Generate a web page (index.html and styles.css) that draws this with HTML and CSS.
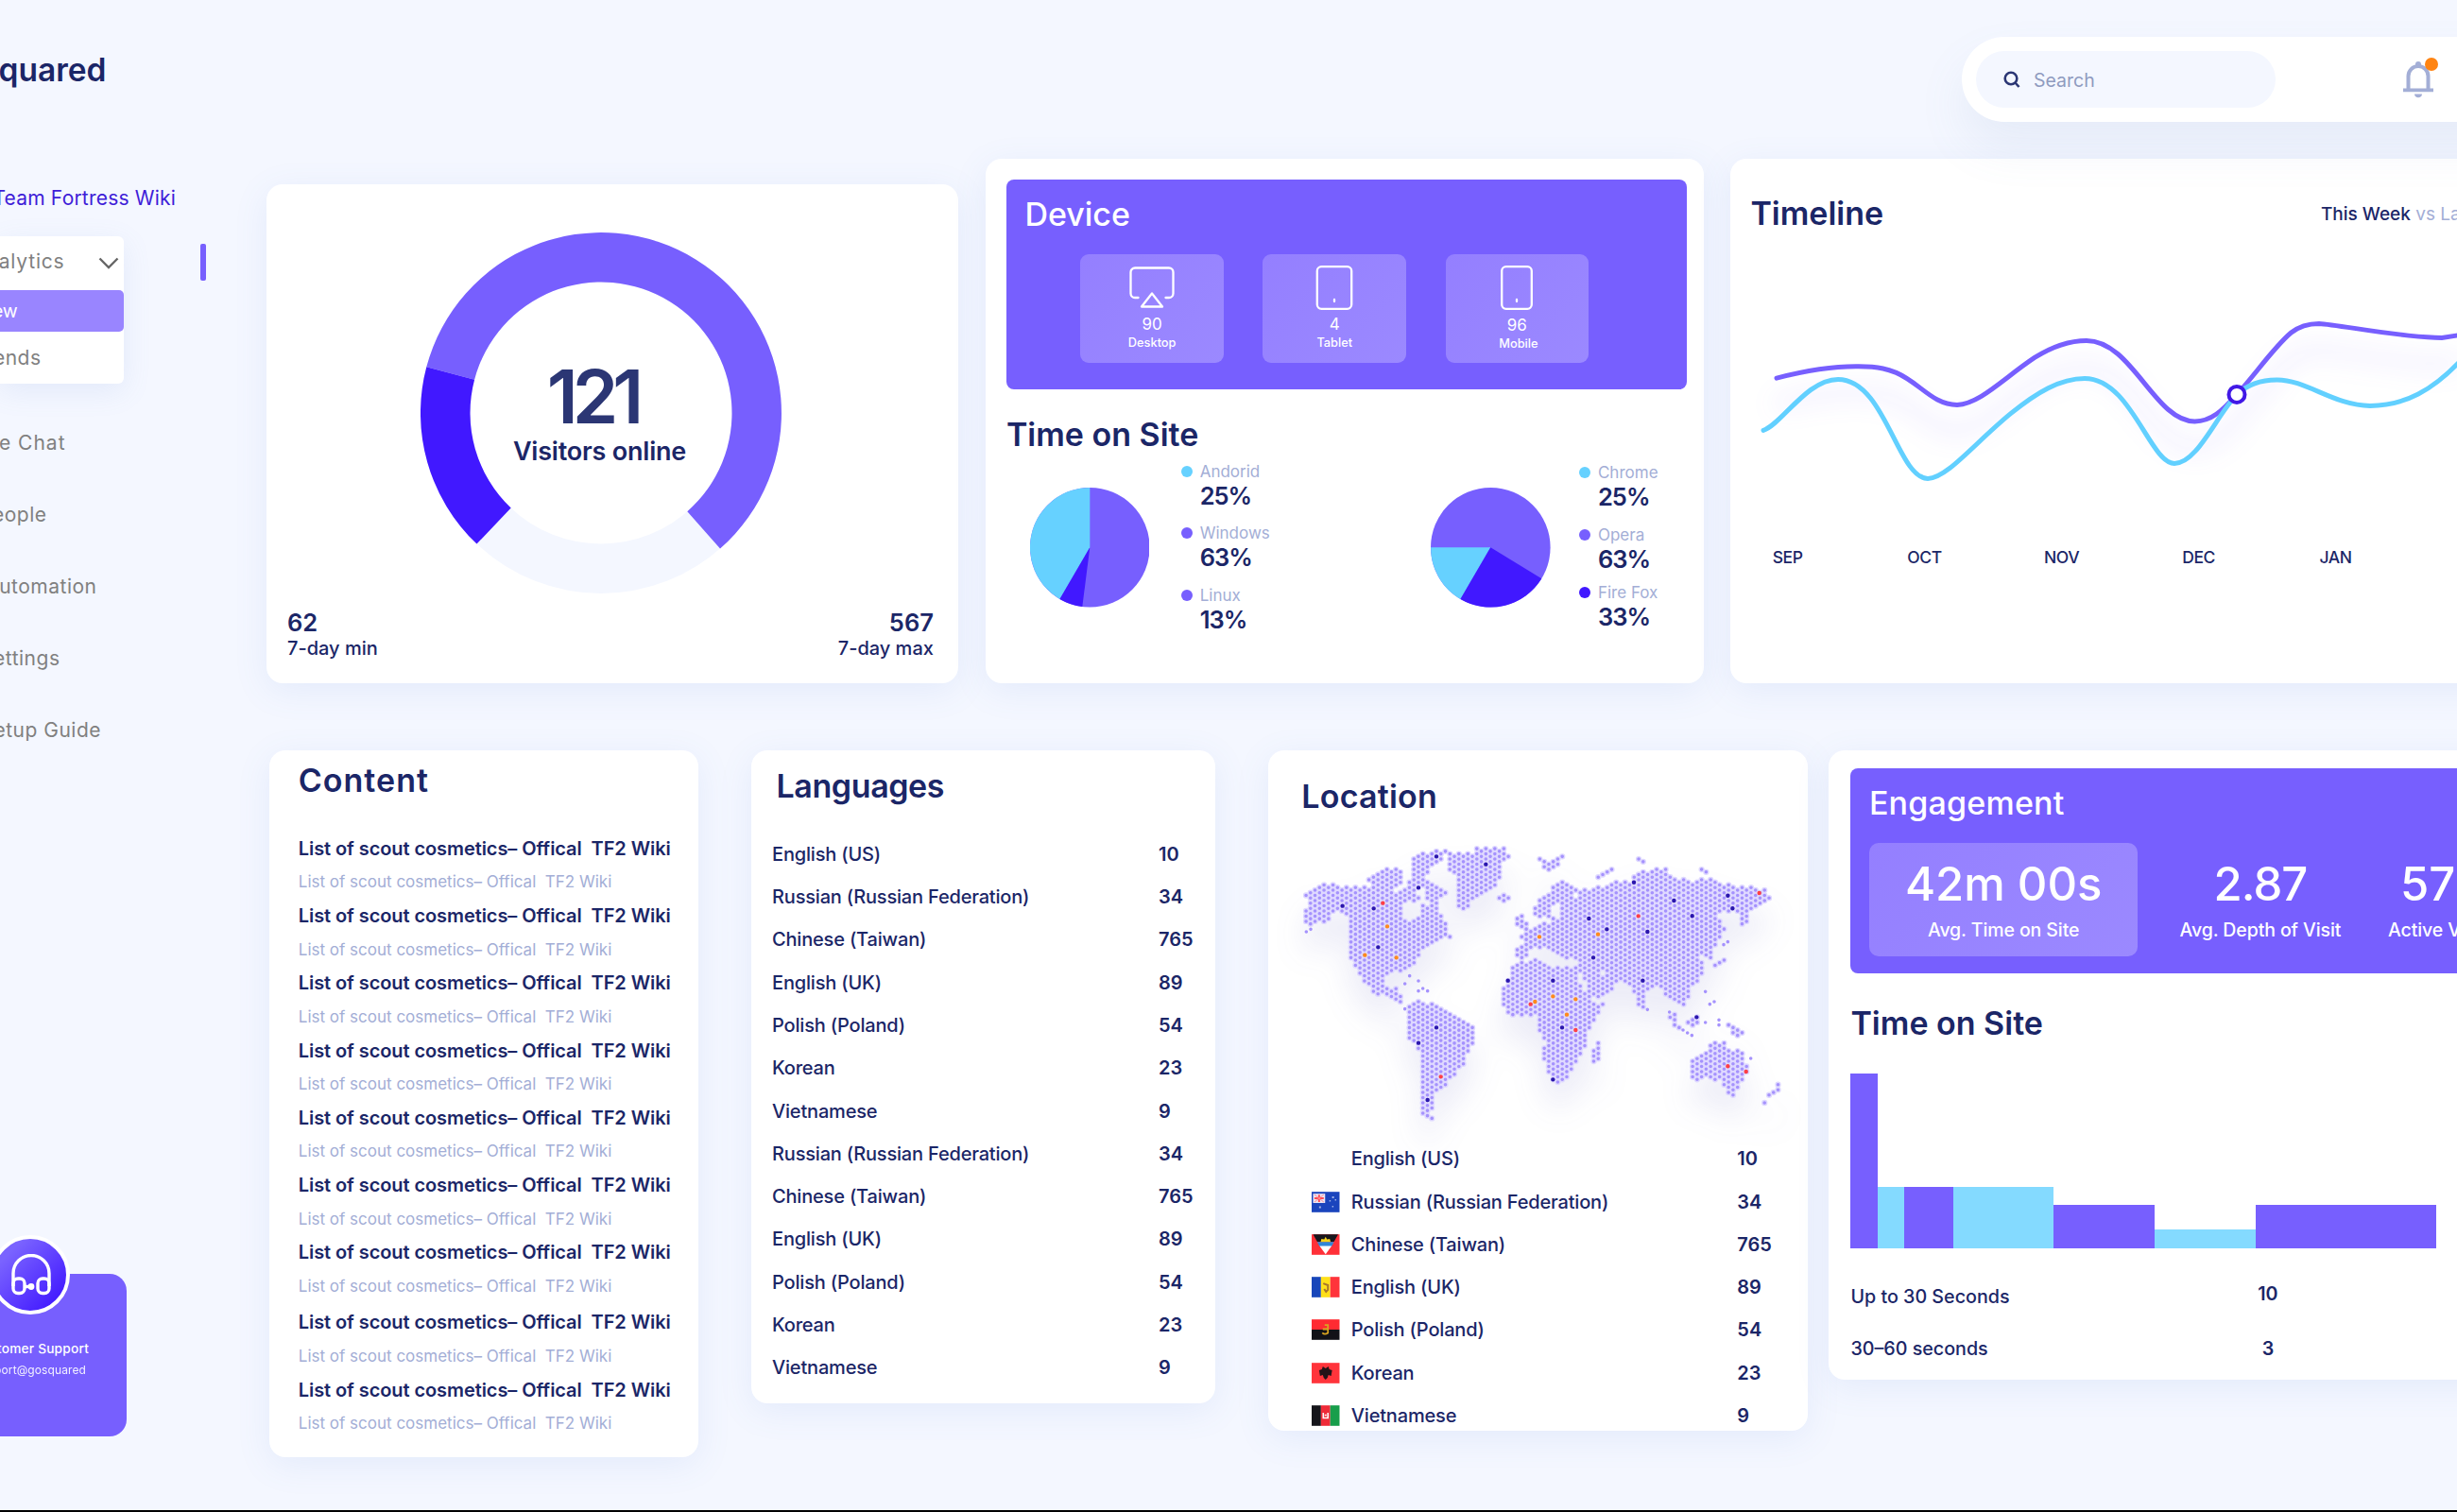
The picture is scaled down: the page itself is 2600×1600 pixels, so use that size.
FILE: index.html
```html
<!DOCTYPE html>
<html lang="en">
<head>
<meta charset="utf-8">
<title>GoSquared Dashboard</title>
<link rel="stylesheet" href="styles.css">
</head>
<body>
<aside class="sidebar">
  <div class="logo">GoSquared</div>
  <div class="project">Team Fortress Wiki</div>
  <div class="menu">
    <div class="menu-head"><span class="label">Analytics</span>
      <svg class="chevron" viewBox="0 0 22 13"><path d="M1.5 1.5 11 11 20.5 1.5"/></svg></div>
    <div class="menu-item active"><span class="label">View</span></div>
    <div class="menu-item"><span class="label">Trends</span></div>
  </div>
  <span class="marker"></span>
  <nav class="nav">
    <a>Live Chat</a><a>People</a><a>Automation</a><a>Settings</a><a>Setup Guide</a>
  </nav>
  <div class="support">
    <span class="support-badge">
      <svg viewBox="0 0 44 44"><path d="M3 34V20.500a19 19 0 0 1 38 0V34"/><rect x="3" y="26" width="12" height="15.500" rx="5"/><rect x="29" y="26" width="12" height="15.500" rx="5"/><path d="M15 34.500h6"/><circle cx="22" cy="34.500" r="1.700"/></svg>
    </span>
    <strong>Customer Support</strong>
    <span>support@gosquared</span>
  </div>
</aside>

<main class="main">
  <header class="topbar">
    <div class="topbar-pill">
      <div class="search">
        <svg viewBox="0 0 18 18"><circle cx="8" cy="8" r="6.300"/><path d="M12.500 12.500 16.500 17"/></svg>
        <span>Search</span>
      </div>
      <div class="bell">
        <svg viewBox="0 0 34 40"><path d="M6.500 31V16.500a10.500 10.500 0 0 1 21 0V31" fill="none" stroke="#a3aed6" stroke-width="4"/><path d="M1 29.500h32v3.800H1zM13 35.500h8c0 5-8 5-8 0zM14 4a3 3 0 0 1 6 0v3h-6z" fill="#a3aed6"/></svg>
        <span class="bell-dot"></span>
      </div>
    </div>
  </header>

  <section class="row row-top">
    <article class="card visitors">
      <div class="donut">
        <svg viewBox="-191 -191 382 382">
          <circle r="164.750" fill="none" stroke="#f4f7ff" stroke-width="52.500"/>
          <path fill="#775ffe" d="M-184.700-48.700A191 191 0 1 1 126 143.600L91.300 104.200A138.500 138.500 0 1 0-133.900-35.300z"/>
          <path fill="#4118ff" d="M-184.700-48.700A191 191 0 0 0-131.500 138.600L-95.300 100.500A138.500 138.500 0 0 1-133.900-35.300z"/>
        </svg>
        <div class="donut-text"><b>121</b><span>Visitors online</span></div>
      </div>
      <div class="range">
        <div><b>62</b><span>7-day min</span></div>
        <div class="right"><b>567</b><span>7-day max</span></div>
      </div>
    </article>

    <article class="card device">
      <div class="panel device-panel">
        <h2>Device</h2>
        <div class="tiles">
          <div class="tile">
            <svg viewBox="0 0 48 47"><path d="M9.500 34H6a4.500 4.500 0 0 1-4.500-4.500V7A4.500 4.500 0 0 1 6 2.500h36A4.500 4.500 0 0 1 46.500 7v22.500A4.500 4.500 0 0 1 42 34h-3.500M24 29.500 35 43.500H13z"/></svg>
            <b>90</b><span>Desktop</span></div>
          <div class="tile">
            <svg viewBox="0 0 48 47"><rect x="5.800" y="1.200" width="36.400" height="44.600" rx="4.500"/><path d="M24 36v2"/></svg>
            <b>4</b><span>Tablet</span></div>
          <div class="tile">
            <svg viewBox="0 0 48 47"><rect x="8.200" y="1.200" width="31.600" height="44.600" rx="4.500"/><path d="M24 36v2"/></svg>
            <b>96</b><span>Mobile</span></div>
        </div>
      </div>
      <h2>Time on Site</h2>
      <div class="pies">
        <svg class="pie" viewBox="-63.300 -63.300 126.600 126.600"><circle r="63.300" fill="#775ffe"/><path fill="#66d1ff" d="M0 0V-63.300A63.300 63.300 0 0 0-31.900 54.700z"/><path fill="#4118ff" d="M0 0-31.900 54.700A63.300 63.300 0 0 0-8 62.800z"/></svg>
        <ul class="legend">
          <li><i class="cyan"></i><span>Andorid</span><b>25%</b></li>
          <li><i></i><span>Windows</span><b>63%</b></li>
          <li><i></i><span>Linux</span><b>13%</b></li>
        </ul>
        <svg class="pie pie-2" viewBox="-63.300 -63.300 126.600 126.600"><circle r="63.300" fill="#775ffe"/><path fill="#66d1ff" d="M0 0H-63.300A63.300 63.300 0 0 0-31.900 54.700z"/><path fill="#4118ff" d="M0 0-31.900 54.700A63.300 63.300 0 0 0 54 33z"/></svg>
        <ul class="legend legend-2">
          <li><i class="cyan"></i><span>Chrome</span><b>25%</b></li>
          <li><i></i><span>Opera</span><b>63%</b></li>
          <li><i class="blue"></i><span>Fire Fox</span><b>33%</b></li>
        </ul>
      </div>
    </article>

    <article class="card timeline">
      <div class="timeline-head"><h2>Timeline</h2><p><b>This Week</b> vs Last Week</p></div>
      <svg class="chart" viewBox="1831 245.600 769 331.400">
        <path class="line purple" d="M1880 399.700C1910 392 1940 387 1967 387.400C1990 387.500 1999 391 2006.600 394C2032 405 2045 428 2071 428C2095 427 2120 400 2153 378C2172 366 2190 360 2208 360C2256 360 2280 445.500 2322.500 445.500C2340 445.500 2352 434 2367 417C2385 398 2406 367 2424.500 351.600C2434 344 2444 342 2454 342C2475 343 2540 357 2584 357L2604 354"/>
        <path class="line cyan" d="M1866 455C1885 449 1912 401 1945 401C1995 401 2008 506 2040 506C2060 506 2090 468 2128 437C2155 415 2180 400 2206 400C2255 400 2275 490 2301 490C2325 490 2345 440 2367 417C2380 405 2394 401.500 2409 401.500C2440 401 2470 429 2508 429C2545 429 2575 412 2604 381"/>
        <circle cx="2367" cy="417" r="8.500" fill="#fff" stroke="#4118e6" stroke-width="4"/>
      </svg>
      <div class="months"><span>SEP</span><span>OCT</span><span>NOV</span><span>DEC</span><span>JAN</span></div>
    </article>
  </section>

  <section class="row row-bottom">
    <article class="card content">
      <h2>Content</h2>
      <dl>
        <dt>List of scout cosmetics– Offical  TF2 Wiki</dt><dd>List of scout cosmetics– Offical  TF2 Wiki</dd>
        <dt>List of scout cosmetics– Offical  TF2 Wiki</dt><dd>List of scout cosmetics– Offical  TF2 Wiki</dd>
        <dt>List of scout cosmetics– Offical  TF2 Wiki</dt><dd>List of scout cosmetics– Offical  TF2 Wiki</dd>
        <dt>List of scout cosmetics– Offical  TF2 Wiki</dt><dd>List of scout cosmetics– Offical  TF2 Wiki</dd>
        <dt>List of scout cosmetics– Offical  TF2 Wiki</dt><dd>List of scout cosmetics– Offical  TF2 Wiki</dd>
        <dt>List of scout cosmetics– Offical  TF2 Wiki</dt><dd>List of scout cosmetics– Offical  TF2 Wiki</dd>
        <dt>List of scout cosmetics– Offical  TF2 Wiki</dt><dd>List of scout cosmetics– Offical  TF2 Wiki</dd>
        <dt class="gap">List of scout cosmetics– Offical  TF2 Wiki</dt><dd>List of scout cosmetics– Offical  TF2 Wiki</dd>
        <dt>List of scout cosmetics– Offical  TF2 Wiki</dt><dd>List of scout cosmetics– Offical  TF2 Wiki</dd>
      </dl>
    </article>

    <article class="card languages">
      <h2>Languages</h2>
      <ul class="list">
        <li><span>English (US)</span><b>10</b></li>
        <li><span>Russian (Russian Federation)</span><b>34</b></li>
        <li><span>Chinese (Taiwan)</span><b>765</b></li>
        <li><span>English (UK)</span><b>89</b></li>
        <li><span>Polish (Poland)</span><b>54</b></li>
        <li><span>Korean</span><b>23</b></li>
        <li><span>Vietnamese</span><b>9</b></li>
        <li><span>Russian (Russian Federation)</span><b>34</b></li>
        <li><span>Chinese (Taiwan)</span><b>765</b></li>
        <li><span>English (UK)</span><b>89</b></li>
        <li><span>Polish (Poland)</span><b>54</b></li>
        <li><span>Korean</span><b>23</b></li>
        <li><span>Vietnamese</span><b>9</b></li>
      </ul>
    </article>

    <article class="card location">
      <h2>Location</h2>
      <svg class="map" id="map" viewBox="0 0 1575 930"></svg>
      <ul class="list flags">
        <li><i></i><span>English (US)</span><b>10</b></li>
        <li><svg class="flag" viewBox="0 0 30 22"><path fill="#1a44bd" d="M0 0h30v22H0z"/><path fill="#e9e4f4" d="M1.500 2h13v10h-13z"/><path fill="#ff4b55" d="M7 3h2v8H7zM3 6h10v2H3z"/><path stroke="#ff8a90" d="m3 3 10 8M13 3 3 11"/><path fill="#9fb2e6" d="M8 15.500h2v2H8zM22 5h2v2h-2zM19 9h1.500v1.500H19zM25 8h1.500v1.500H25zM22 15h1.500v1.500H22z"/></svg><span>Russian (Russian Federation)</span><b>34</b></li>
        <li><svg class="flag" viewBox="0 0 30 22"><path fill="#ff3038" d="M0 0h30v22H0z"/><path fill="#17171d" d="M1.500 0h27L24 8H6z"/><path fill="#f7d21a" d="M9.500 8.500 10.500 5l3 .5L15 2.500l1.500 3 3-.5 1 3.500z"/><path fill="#2f87d8" d="M6 8.300h18L21.500 13h-13z"/><path fill="#fff" d="M8.500 12.500h13L15 21.500z"/></svg><span>Chinese (Taiwan)</span><b>765</b></li>
        <li><svg class="flag" viewBox="0 0 30 22"><path fill="#1746ba" d="M0 0h10v22H0z"/><path fill="#ffe019" d="M10 0h10v22H10z"/><path fill="#ff343b" d="M20 0h10v22H20z"/><path fill="none" stroke="#a7762c" stroke-width="2" d="m12.500 7 5 2v5l-2 2-2-3"/></svg><span>English (UK)</span><b>89</b></li>
        <li><svg class="flag" viewBox="0 0 30 22"><path fill="#ff2b32" d="M0 0h30v11H0z"/><path fill="#121217" d="M0 11h30v11H0z"/><path fill="none" stroke="#d9a520" stroke-width="1.800" d="M14 6h3.500v8.500q-3.500 2.500-6 0M12 10.500h5"/></svg><span>Polish (Poland)</span><b>54</b></li>
        <li><svg class="flag" viewBox="0 0 30 22"><path fill="#ff343b" d="M0 0h30v22H0z"/><path fill="#241318" d="m12 4 3 2 3-2 1 3 3 1-1 6-3-1-1 3-2 2-2-2-1-3-3 1-1-6 3-1z"/></svg><span>Korean</span><b>23</b></li>
        <li><svg class="flag" viewBox="0 0 30 22"><path fill="#15151b" d="M0 0h10v22H0z"/><path fill="#ef2b38" d="M10 0h10v22H10z"/><path fill="#189e4b" d="M20 0h10v22H20z"/><path fill="none" stroke="#fff" stroke-width="1.600" d="M12.500 8v5.500h5V8M14 10.500h2"/></svg><span>Vietnamese</span><b>9</b></li>
      </ul>
    </article>

    <article class="card engagement">
      <div class="panel engagement-panel">
        <h2>Engagement</h2>
        <div class="stats">
          <div class="stat highlighted"><b>42m 00s</b><span>Avg. Time on Site</span></div>
          <div class="stat wide"><b>2.87</b><span>Avg. Depth of Visit</span></div>
          <div class="stat"><b>57%</b><span>Active Visitors</span></div>
        </div>
      </div>
      <h2>Time on Site</h2>
      <div class="bars">
        <i style="width:28.5px;height:184.5px"></i><i class="alt" style="width:28px;height:64.5px"></i><i style="width:52.5px;height:64.5px"></i><i class="alt" style="width:105.5px;height:64.5px"></i><i style="width:107.5px;height:46px"></i><i class="alt" style="width:107px;height:19.5px"></i><i style="width:191px;height:46px"></i>
      </div>
      <ul class="list durations">
        <li><span>Up to 30 Seconds</span><b>10</b></li>
        <li><span>30–60 seconds</span><b>3</b></li>
      </ul>
    </article>
  </section>
</main>
<script src="map.js"></script>
</body>
</html>
```
FILE: styles.css
```css
* { box-sizing: border-box; margin: 0; padding: 0; }

html { overflow: hidden; }
body {
  width: 2600px;
  height: 1600px;
  overflow: hidden;
  display: flex;
  background: #f4f7ff;
  border-bottom: 2px solid #000;
  font-family: Inter, "Liberation Sans", sans-serif;
  color: #1b2667;
}

ul { list-style: none; }
svg { display: block; }
h2 { font-size: 34px; font-weight: 600; line-height: 40px; white-space: nowrap; }

/* Sidebar */
.sidebar { position: relative; flex: none; width: 282px; padding-top: 53.6px; color: #808080; font-size: 21px; letter-spacing: .5px; }
.logo, .project, .menu .label, .nav a, .support strong, .support span {
  display: flex;
  justify-content: flex-end;
  white-space: nowrap;
}
.logo { width: 112.500px; font-size: 33.5px; font-weight: 600; line-height: 40px; letter-spacing: 0; color: #1b2667; }
.project { width: 186px; margin-top: 101.3px; line-height: 30px; letter-spacing: .2px; color: #3f1dd8; }
.menu {
  width: 131px;
  height: 156px;
  margin-top: 25.1px;
  border-radius: 0 6px 6px 0;
  background: #fff;
  box-shadow: 0 8px 30px rgba(110, 140, 210, .12);
}
.menu-head { display: flex; align-items: center; height: 57px; padding-bottom: 3px; }
.menu-head .label { width: 68.500px; letter-spacing: .8px; }
.chevron { width: 22px; height: 13px; margin-left: 35.500px; margin-top: 4px; fill: none; stroke: #666; stroke-width: 2.4; }
.menu-item { display: flex; align-items: center; height: 54.5px; }
.menu-item .label { width: 43.500px; }
.menu-item.active { height: 44.500px; border-radius: 0 5px 5px 0; background: #9985ff; color: #fff; }
.menu-item.active .label { width: 18.500px; font-size: 19.500px; letter-spacing: -.3px; }
.marker { position: absolute; left: 212px; top: 258px; width: 5.5px; height: 39px; border-radius: 2px; background: #775ffe; }
.nav { padding-top: 24px; }
.nav a { height: 76px; line-height: 77px; }
.nav a:nth-child(1) { width: 69.500px; letter-spacing: 1px; }
.nav a:nth-child(2) { width: 49.500px; }
.nav a:nth-child(3) { width: 102.500px; }
.nav a:nth-child(4) { width: 63.500px; }
.nav a:nth-child(5) { width: 107px; }
.support {
  position: relative;
  width: 134px;
  height: 172px;
  margin-top: 538px;
  padding-top: 69px;
  border-radius: 0 18px 18px 0;
  background: #775ffe;
  color: #fff;
  letter-spacing: 0;
}
.support strong { width: 94px; font-size: 13.7px; font-weight: 500; line-height: 20px; letter-spacing: .2px; }
.support > span:last-child { width: 91px; margin-top: 3px; font-size: 12px; line-height: 20px; letter-spacing: .1px; opacity: .9; }
.support .support-badge {
  position: absolute;
  left: -10px;
  top: -41px;
  width: 84px;
  height: 84px;
  padding: 16px 15px 0 0;
  border: 4px solid #fff;
  border-radius: 50%;
  background: linear-gradient(135deg, #7a63ff 20%, #4118ff 90%);
}
.support-badge svg { flex: none; width: 44px; height: 44px; fill: none; stroke: #fff; stroke-width: 3.4; }

/* Main area */
.main { flex: none; width: 2318px; }
.topbar { height: 168px; padding: 39px 0 0 1794px; }
.topbar-pill {
  position: relative;
  display: flex;
  align-items: center;
  width: 700px;
  height: 90px;
  padding-left: 15px;
  border-radius: 45px;
  background: #fff;
  box-shadow: 0 26px 50px rgba(110, 140, 190, .1);
}
.search { display: flex; align-items: center; width: 316.500px; height: 60px; padding-left: 29px; border-radius: 30px; background: #f4f7ff; }
.search svg { width: 18px; height: 18px; fill: none; stroke: #2b3674; stroke-width: 2.600; }
.search span { margin: 2px 0 0 14px; font-size: 19.500px; color: #8f9bbf; }
.bell { position: relative; margin-left: 134px; }
.bell svg { width: 34px; height: 40px; }
.bell-dot { position: absolute; left: 24px; top: -3px; width: 14px; height: 14px; border-radius: 50%; background: #ff8412; }

.row { display: flex; }
.row-top { align-items: flex-end; gap: 28.5px; height: 554.7px; }
.row-bottom { align-items: flex-start; gap: 56px; padding: 71.300px 0 0 2.500px; }
.card { flex: none; border-radius: 17px; background: #fff; box-shadow: 0 8px 36px rgba(90, 130, 220, .1); }
.panel { border-radius: 8px; background: #775ffe; color: #fff; }
.panel h2 { font-weight: 500; }

/* Visitors */
.visitors { width: 732.400px; height: 527.700px; }
.donut { position: relative; width: 382px; height: 382px; margin: 51px 0 0 162.500px; }
.donut-text { position: absolute; left: 0; top: 144px; width: 380px; display: flex; flex-direction: column; align-items: center; }
.donut-text b { margin-right: 15px; font-size: 78px; font-weight: 600; line-height: 60px; letter-spacing: -6px; color: #2b3674; }
.donut-text span { margin-top: 15px; font-size: 27px; font-weight: 600; line-height: 25px; letter-spacing: -.2px; }
.range { display: flex; justify-content: space-between; padding: 17.200px 26.500px 0 22px; font-size: 20px; }
.range b, .range span { display: block; line-height: 26px; font-weight: 500; }
.range b { font-size: 25.500px; line-height: 28px; font-weight: 600; }
.range .right { text-align: right; }

/* Device */
.device { width: 760px; height: 554.700px; padding: 22px 18px 0 22px; }
.device-panel { height: 222.400px; padding: 17px 0 0 19.500px; }
.device > h2 { margin-top: 27.600px; }
.tiles { display: flex; gap: 41.500px; margin: 21.800px 0 0 59px; }
.tile {
  display: flex;
  flex-direction: column;
  align-items: center;
  width: 151.600px;
  height: 115.600px;
  padding-top: 12.600px;
  border-radius: 9px;
  background: linear-gradient(135deg, #947fff, #9b89ff);
}
.tile svg { width: 48px; height: 47px; fill: none; stroke: #fff; stroke-width: 2.300; stroke-linecap: round; stroke-linejoin: round; }
.tile b { margin-top: 5px; font-size: 17px; font-weight: 400; line-height: 20px; }
.tile span { font-size: 12.800px; font-weight: 500; line-height: 20px; }
.tile:nth-child(3) b { margin-top: 6px; }
.tile:nth-child(3) span { margin-left: 3px; }
.pies { display: flex; align-items: flex-start; padding-left: 25px; }
.pie { flex: none; width: 126.600px; height: 126.600px; margin-top: 36.500px; }
.pie-2 { margin-left: 157px; }
.legend { width: 107px; margin: 7px 0 0 33.700px; }
.legend-2 { margin: 8.400px 0 0 30.700px; }
.legend li { display: grid; grid-template-columns: 19.500px auto; align-items: center; margin-bottom: 13.100px; white-space: nowrap; }
.legend i { width: 12px; height: 12px; border-radius: 50%; background: #775ffe; }
.legend .cyan { background: #66d1ff; }
.legend .blue { background: #4118ff; }
.legend span { font-size: 17px; line-height: 24px; color: #a3aed6; }
.legend b { grid-column: 2; font-size: 25.500px; font-weight: 600; line-height: 28.200px; letter-spacing: -1px; }
.legend-2 li:nth-child(2) { margin-bottom: 9px; }

/* Timeline */
.timeline { width: 900px; height: 554.700px; margin-left: -.5px; padding-top: 38px; }
.timeline-head { display: flex; align-items: center; padding-left: 21.500px; }
.timeline-head h2 { width: 603.500px; }
.timeline-head p { font-size: 19px; color: #a3aed6; white-space: nowrap; }
.timeline-head b { font-weight: 500; color: #1b2667; }
.chart { width: 769px; height: 331.400px; }
.line { fill: none; stroke-width: 5; stroke-linecap: round; }
.line.purple { stroke: #775ffe; filter: drop-shadow(0 28px 14px rgba(100, 70, 255, .24)); }
.line.cyan { stroke: #62d0ff; }
.months { display: grid; grid-template-columns: repeat(5, 145px); margin-left: -11.800px; text-align: center; font-size: 17.500px; font-weight: 500; line-height: 25px; letter-spacing: -.4px; }

/* Content */
.content { width: 454.500px; height: 748.400px; padding: 12.500px 0 0 31.300px; }
.content h2 { letter-spacing: 1px; }
.content dl { margin-top: 34.100px; }
.content dt, .content dd { white-space: pre; line-height: 35.650px; }
.content dt { font-size: 20px; font-weight: 600; letter-spacing: -.08px; }
.content dd { font-size: 17px; color: #a3aed6; }
.content .gap { margin-top: 2.700px; }

/* Lists */
.list li { display: flex; align-items: center; height: 45.300px; font-size: 20px; font-weight: 500; white-space: nowrap; }
.list b { font-weight: 600; }
.languages { width: 491px; height: 691px; padding: 18.500px 0 0 22px; }
.languages h2 { padding-left: 4.500px; letter-spacing: -.4px; }
.languages .list { margin-top: 28.600px; }
.languages .list span { width: 409px; letter-spacing: -.18px; }

/* Location */
.location { width: 571px; height: 720.500px; margin-left: -.2px; padding: 28.600px 0 0 33px; }
.location h2 { padding-left: 2.500px; letter-spacing: .2px; }
.map { width: 525px; height: 310px; margin-top: 27.400px; overflow: visible; filter: drop-shadow(0 26px 16px rgba(70, 70, 180, .1)); }
.flags { padding: 3.600px 0 0 13.500px; }
.flags i, .flag { flex: none; width: 29.500px; height: 22px; margin-right: 12px; }
.flags span { width: 408.500px; letter-spacing: -.18px; }

/* Engagement */
.engagement { width: 800px; height: 666.500px; margin-left: -33.400px; padding: 19.500px 0 0 23px; }
.engagement-panel { height: 216.600px; padding: 16.700px 0 0 19.500px; }
.engagement-panel h2 { letter-spacing: .2px; }
.stats { display: flex; margin-top: 21.800px; }
.stat { display: flex; flex-direction: column; align-items: center; width: 144px; height: 120px; padding-top: 16px; white-space: nowrap; }
.stat.highlighted { width: 284.500px; border-radius: 10px; background: linear-gradient(135deg, #947fff, #9b89ff); }
.stat.wide { width: 259px; }
.stat b { font-size: 49px; font-weight: 500; line-height: 56px; }
.stat.wide b { letter-spacing: -1px; }
.stat span { margin-top: 8.200px; font-size: 19.500px; font-weight: 500; line-height: 24px; letter-spacing: -.1px; }
.engagement > h2 { margin-top: 33.200px; }
.bars { display: flex; align-items: flex-end; height: 184.600px; margin-top: 32.800px; }
.bars i { background: #775ffe; }
.bars .alt { background: #84daff; }
.durations { margin-top: 23.600px; }
.durations li { height: 54.900px; font-size: 19.700px; }
.durations span { width: 416.500px; }
.durations b { width: 50px; text-align: center; }
.durations li:first-child b { padding-bottom: 6px; }
```
FILE: map.js
```js
// Dotted world map: land outlines are sampled on a staggered lattice.
const EAST = 645;
const shift = (dx, s) => s.split(" ").map(p => { const [x, y] = p.split(",").map(Number); return [x + dx, y]; });
const west = s => shift(0, s), east = s => shift(EAST, s);

const land = [
  west("20,165 60,140 90,132 120,140 240,146 310,158 335,145 350,165 380,170 385,195 440,205 455,240 470,270 470,295 440,320 405,335 385,360 370,395 340,412 275,420 274,460 290,472 310,465 330,500 325,520 290,503 240,484 203,450 183,415 160,370 160,255 130,228 105,232 100,250 60,262 15,270 15,225 25,200"),
  west("215,120 235,102 290,82 328,95 330,125 300,152 250,148"),
  west("335,135 375,110 410,125 448,140 470,165 445,175 452,202 420,200 405,180 395,150 380,160 360,168"),
  west("355,50 400,35 470,28 450,65 420,90 400,110 390,130 358,120"),
  west("470,38 545,40 570,18 655,20 672,50 642,70 642,120 610,158 560,180 530,225 503,215 500,130 490,100 470,90"),
  west("455,292 475,298 487,305 470,308"),
  west("628,165 672,180 650,197 628,185"),
  west("343,520 380,500 440,525 490,558 557,588 560,628 537,660 527,700 498,742 460,782 430,805 430,850 415,868 437,885 425,892 403,880 385,862 385,670 343,630"),
  east("110,52 150,68 190,42 200,52 150,98 125,80"),
  east("295,130 305,108 345,85 352,97 310,128"),
  east("430,55 465,58 445,72"),
  east("625,88 652,92 650,108"),
  east("100,225 97,205 135,172 160,142 190,128 215,143 250,155 290,153 360,125 400,132 430,103 490,83 520,86 545,118 610,128 660,116 730,143 800,140 840,158 862,185 800,222 780,230 775,262 755,272 750,225 715,225 680,235 690,250 708,270 697,310 665,345 662,375 620,362 637,395 635,430 620,452 598,465 585,523 560,515 515,485 500,460 480,465 462,480 447,530 430,518 413,470 380,442 355,445 345,478 300,500 265,498 240,400 238,380 185,370 165,352 150,345 125,340 85,340 80,365 60,372 40,365 40,335 75,330 55,300 80,288 100,265 150,255 155,240 110,240"),
  east("30,262 55,235 67,235 82,270 77,290 60,272 40,275"),
  east("35,390 105,370 125,390 165,402 235,400 245,440 265,480 285,512 322,515 305,550 285,582 267,605 267,650 247,685 215,740 180,772 155,765 140,715 127,680 135,640 113,590 115,550 65,557 30,552 8,535 -2,500 -2,465 18,430"),
  east("300,633 312,650 306,690 285,718 273,700 285,660"),
  east("713,365 720,378 672,398 668,390 700,372"),
  east("525,560 545,530 552,560 567,590 555,602"),
  east("588,575 613,540 628,580 606,597"),
  east("710,575 740,588 775,610 740,622 725,605"),
  east("596,702 640,670 660,648 700,630 712,655 735,672 740,645 750,655 770,680 780,732 752,782 732,812 712,797 700,765 660,752 612,768 596,740"),
  east("868,763 882,775 872,797 845,815 840,830 823,833 838,803 862,795")
];

const water = [
  west("328,200 350,186 385,198 390,235 365,252 332,242"),
  east("155,215 175,200 187,230 167,247 152,240"),
  east("225,162 240,162 240,182 225,182"),
  east("240,435 256,435 268,465 268,485 254,485"),
  east("310,408 326,408 326,428 310,428")
];

const islands = [
  [22, 288], [36, 280], [335, 453], [350, 428], [378, 444], [378, 476], [392, 468], [407, 476], [335, 533],
  ...[[715, 320], [702, 329], [644, 478], [672, 510], [658, 518], [587, 609], [601, 617], [573, 600], [644, 576], [687, 568], [687, 584], [788, 690], [530, 543], [460, 535]].map(([x, y]) => [x + EAST, y])
];

const accents = {
  "#2a16ad": [[435, 49], [592, 74], [378, 148], [137, 206], [236, 214], [250, 337], [435, 592], [378, 641], [407, 822],
    [1062, 131], [1189, 189], [1360, 173], [1375, 214], [1247, 238], [1105, 288], [919, 246], [976, 280], [933, 370], [1090, 443], [662, 443], [805, 443], [834, 592], [805, 757], [1261, 559]],
  "#ff8a1c": [[279, 271], [208, 362], [308, 370], [762, 304], [948, 296], [805, 493], [877, 502], [748, 510], [849, 551]],
  "#ff3f45": [[265, 197], [449, 748], [734, 518], [1076, 238], [1460, 165], [877, 600], [1360, 715], [1418, 732]]
};

const inside = (poly, x, y) => {
  let hit = false;
  for (let i = 0, j = poly.length - 1; i < poly.length; j = i++) {
    const [xi, yi] = poly[i], [xj, yj] = poly[j];
    if ((yi > y) !== (yj > y) && x < (xj - xi) * (y - yi) / (yj - yi) + xi) hit = !hit;
  }
  return hit;
};

const dot = (x, y, r) => `M${(x - r).toFixed(1)} ${y.toFixed(1)}a${r} ${r} 0 1 0 ${2 * r} 0a${r} ${r} 0 1 0 ${-2 * r} 0`;

let dots = "", halo = "";
for (let i = -30; i < 80; i++) {
  for (let j = -5; j < 108; j++) {
    if ((i + j) % 2) continue;
    const x = 435 + 14.27 * i, y = 49 + 8.23 * j;
    if (land.some(p => inside(p, x, y)) && !water.some(p => inside(p, x, y))) {
      dots += dot(x, y, 5.4);
      halo += dot(x, y, 9.5);
    }
  }
}
islands.forEach(([x, y]) => { dots += dot(x, y, 5.4); });

let svg = `<path fill="#dfd9ff" d="${halo}"/><path fill="#a592fd" d="${dots}"/>`;
for (const [color, points] of Object.entries(accents)) {
  svg += `<path fill="${color}" d="${points.map(([x, y]) => dot(x, y, 6.6)).join("")}"/>`;
}
document.getElementById("map").innerHTML = svg;
```
